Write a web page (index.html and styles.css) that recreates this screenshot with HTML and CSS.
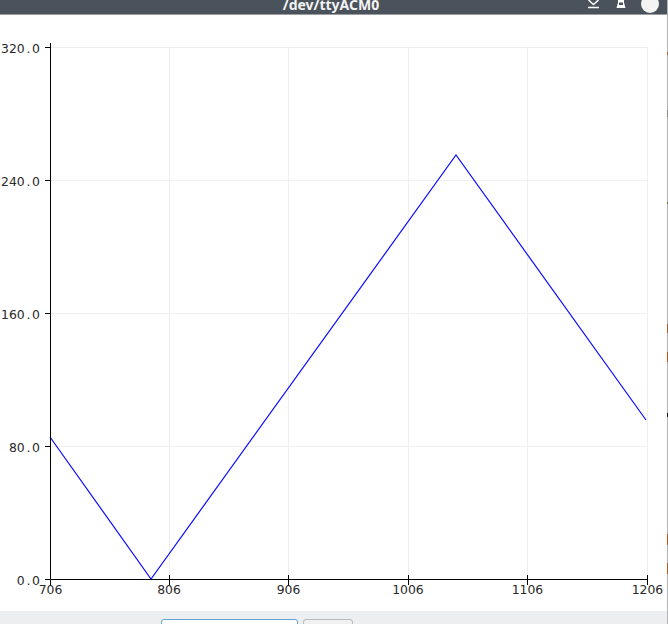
FILE: index.html
```html
<!DOCTYPE html>
<html lang="en">
<head>
<meta charset="utf-8">
<title>/dev/ttyACM0</title>
<link rel="stylesheet" href="styles.css">
</head>
<body>
<div class="window">
  <header class="titlebar">
    <span class="title">/dev/ttyACM0</span>
    <div class="controls">
      <svg class="ctl ctl-min" width="11" height="9" viewBox="0 0 11 9"><path d="M0.5 0 5.5 4.5 10.5 0M0 7.5H11" fill="none" stroke="#fff" stroke-width="1.5"/></svg>
      <svg class="ctl ctl-max" width="10" height="8" viewBox="0 0 10 8"><path d="M2 0H8V2.5L9.5 8H0.5L2 2.5Z" fill="#fff"/><rect x="3" y="2.5" width="4" height="2.5" fill="#4a525b"/></svg>
      <span class="close"></span>
    </div>
  </header>
  <main class="plot">
    <svg class="chart" width="667" height="596" viewBox="0 15 667 596">
      <g class="grid">
        <path d="M50 47.5H647.5M50 180.5H647.5M50 313.5H647.5M50 446.5H647.5"/>
        <path d="M169.5 47V579M288.5 47V579M408.5 47V579M527.5 47V579M647.5 47V579"/>
      </g>
      <polyline class="trace" points="50,437 151,579 456,155 646,420"/>
      <g class="axes">
        <path d="M50.5 43V579.5H647.5"/>
        <path d="M45 47.5H50M45 180.5H50M45 313.5H50M45 446.5H50M45 579.5H50"/>
        <path d="M50.5 580V585M169.5 575V585M288.5 575V585M408.5 575V585M527.5 575V585M647.5 575V585"/>
      </g>
      <g class="labels ylabels">
        <text x="40" y="53">320<tspan dx="1.7">.</tspan><tspan dx="1.7">0</tspan></text>
        <text x="40" y="186">240<tspan dx="1.7">.</tspan><tspan dx="1.7">0</tspan></text>
        <text x="40" y="319">160<tspan dx="1.7">.</tspan><tspan dx="1.7">0</tspan></text>
        <text x="40" y="452">80<tspan dx="1.7">.</tspan><tspan dx="1.7">0</tspan></text>
        <text x="40" y="585">0<tspan dx="1.7">.</tspan><tspan dx="1.7">0</tspan></text>
      </g>
      <g class="labels xlabels">
        <text x="50.5" y="594">706</text>
        <text x="169" y="594">806</text>
        <text x="288.5" y="594">906</text>
        <text x="408" y="594">1006</text>
        <text x="527.5" y="594">1106</text>
        <text x="647.5" y="594">1206</text>
      </g>
    </svg>
  </main>
  <footer class="footer">
    <div class="field"></div>
    <div class="btn"></div>
  </footer>
  <div class="edge"></div>
</div>
</body>
</html>
```
FILE: styles.css
```css
html, body {
  margin: 0;
  padding: 0;
  height: 100%;
  overflow: hidden;
  background: #fff;
}
.window {
  position: relative;
  width: 668px;
  height: 624px;
  padding-right: 1px;
  box-sizing: border-box;
  display: flex;
  flex-direction: column;
}
.edge {
  position: absolute;
  top: 0;
  right: 0;
  width: 1px;
  height: 624px;
  background:
    linear-gradient(#b4581c, #b4581c) 0 52px / 1px 3px no-repeat,
    linear-gradient(#8a8a80, #8a8a80) 0 110px / 1px 7px no-repeat,
    linear-gradient(#6d6a30, #6d6a30) 0 202px / 1px 2px no-repeat,
    linear-gradient(#b4581c, #b4581c) 0 324px / 1px 9px no-repeat,
    linear-gradient(#b4581c, #b4581c) 0 352px / 1px 10px no-repeat,
    linear-gradient(#111, #111) 0 413px / 1px 4px no-repeat,
    linear-gradient(#b4581c, #b4581c) 0 534px / 1px 11px no-repeat,
    linear-gradient(#b4581c, #b4581c) 0 563px / 1px 11px no-repeat,
    #b4b4b4;
}
.titlebar {
  height: 15px;
  flex: none;
  box-sizing: border-box;
  background: #4a525b;
  border-bottom: 1px solid #9b9fa3;
  position: relative;
  overflow: hidden;
}
.title {
  position: absolute;
  left: 0;
  right: 0;
  top: -5px;
  padding-right: 5px;
  text-align: center;
  color: #f2f3f4;
  font: bold 14px/20px "Noto Sans", sans-serif;
}
.controls {
  position: absolute;
  top: 0;
  right: 0;
  display: flex;
  align-items: flex-start;
  padding-right: 8px;
}
.ctl { flex: none; }
.ctl-min { margin-right: 17px; }
.ctl-max { margin-right: 15px; }
.close {
  width: 18px;
  height: 18px;
  margin-top: -5px;
  border-radius: 50%;
  background: #f4f4f4;
}
.plot {
  height: 596px;
  flex: none;
  background: #fff;
}
.chart { display: block; }
.grid path { fill: none; stroke: #efefef; stroke-width: 1; }
.trace { fill: none; stroke: #0a0aff; stroke-width: 1.2; }
.axes path { fill: none; stroke: #000; stroke-width: 1; }
.labels text {
  font-family: "DejaVu Sans", sans-serif;
  font-size: 12.4px;
  fill: #2a2a2a;
}
.ylabels text { text-anchor: end; }
.xlabels text { text-anchor: middle; }
.footer {
  flex: 1;
  background: #eceef0;
  display: flex;
  gap: 5px;
  padding: 8px 0 0 161px;
  overflow: hidden;
}
.field {
  width: 135px;
  height: 20px;
  background: #fff;
  border: 1px solid #5ea5d6;
  border-radius: 3px;
  flex: none;
}
.btn {
  width: 48px;
  height: 20px;
  background: #f1f1f1;
  border: 1px solid #b8babc;
  border-radius: 3px;
  flex: none;
}
```
